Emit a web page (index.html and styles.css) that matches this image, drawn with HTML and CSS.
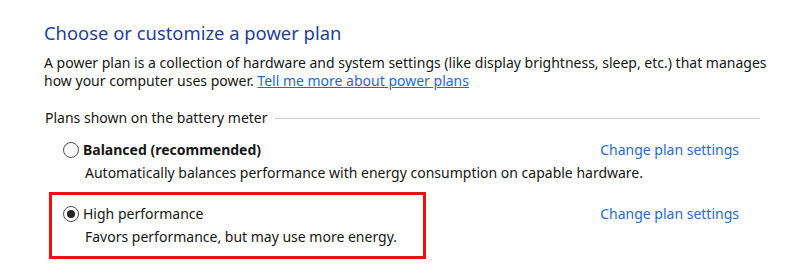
FILE: index.html
```html
<!DOCTYPE html>
<html lang="en">
<head>
<meta charset="utf-8">
<title>Power Options</title>
<link rel="stylesheet" href="styles.css">
</head>
<body>
<main class="page">
  <h1 class="title">Choose or customize a power plan</h1>
  <p class="intro">A power plan is a collection of hardware and system settings (like display brightness, sleep, etc.) that manages how your computer uses power. <a class="link link--inline" href="#">Tell me more about power plans</a></p>

  <section class="group">
    <div class="group-header">
      <span class="group-label">Plans shown on the battery meter</span>
      <span class="group-line"></span>
    </div>

    <div class="plans">
      <div class="plan">
        <div class="plan-row">
          <label class="plan-name plan-name--bold"><span class="radio"></span>Balanced (recommended)</label>
          <a class="link link--plain" href="#">Change plan settings</a>
        </div>
        <div class="plan-desc">Automatically balances performance with energy consumption on capable hardware.</div>
      </div>

      <div class="plan plan--highlight">
        <div class="plan-row">
          <label class="plan-name"><span class="radio radio--checked"></span>High performance</label>
          <a class="link link--plain" href="#">Change plan settings</a>
        </div>
        <div class="plan-desc">Favors performance, but may use more energy.</div>
        <span class="highlight-box"></span>
      </div>
    </div>
  </section>
</main>
</body>
</html>
```
FILE: styles.css
```css
html, body {
  margin: 0;
  padding: 0;
  background: #ffffff;
}

body {
  min-height: 275px;
  font-family: "Noto Sans", "Open Sans", sans-serif;
  font-size: 14px;
  line-height: 18px;
  color: #161616;
}

.page {
  width: 726px;
  padding: 21px 0 28px 44px;
}

.title {
  margin: 0;
  font-size: 18.4px;
  line-height: 24px;
  font-weight: 400;
  color: #1f3f9e;
}

.intro {
  margin: 9px 0 0 0;
}

.link {
  color: #1f6ad0;
  text-decoration: underline;
}

.link--inline {
  display: inline-block;
  line-height: 18px;
}

.link--plain {
  text-decoration: none;
}

.group {
  margin-top: 19px;
}

.group-header {
  display: flex;
  align-items: center;
  margin: 0 10px 0 1px;
}

.group-label {
  white-space: nowrap;
}

.group-line {
  flex: 1;
  height: 1px;
  margin-left: 7px;
  background: #cccccc;
}

.plans {
  margin: 14px 31px 0 19px;
  display: flex;
  flex-direction: column;
  gap: 23px;
}

.plan {
  position: relative;
}

.plan-row {
  display: flex;
  align-items: center;
  justify-content: space-between;
}

.plan-name {
  display: flex;
  align-items: center;
  gap: 4px;
}

.plan-name--bold {
  font-weight: 700;
}

.radio {
  box-sizing: border-box;
  width: 16px;
  height: 16px;
  border: 1px solid #505050;
  border-radius: 50%;
  background: #ffffff;
  display: flex;
  align-items: center;
  justify-content: center;
}

.radio--checked::after {
  content: "";
  width: 8px;
  height: 8px;
  border-radius: 50%;
  background: #262626;
}

.plan-desc {
  margin: 5px 0 0 22px;
}

.highlight-box {
  position: absolute;
  left: -14px;
  top: -13px;
  width: 377px;
  height: 67px;
  box-sizing: border-box;
  border: 3px solid #ee1111;
  pointer-events: none;
}
```
